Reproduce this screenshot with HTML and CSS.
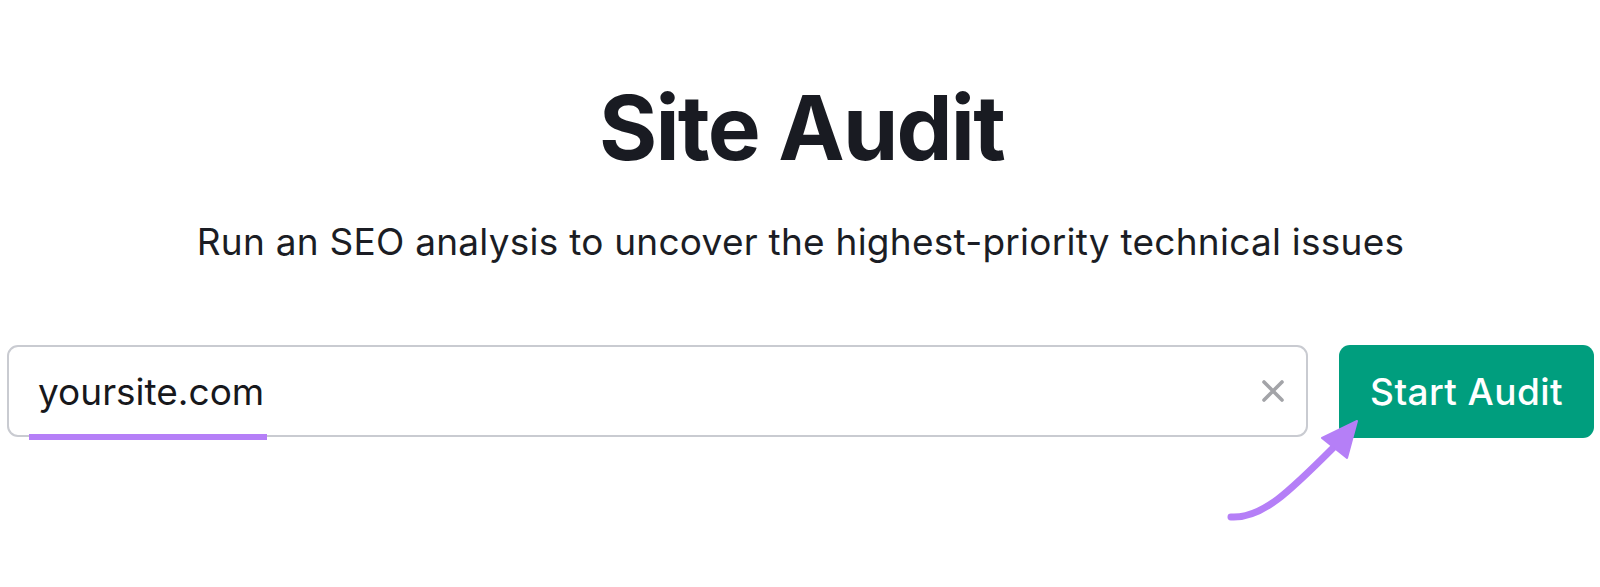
FILE: index.html
```html
<!DOCTYPE html>
<html lang="en">
<head>
<meta charset="utf-8">
<title>Site Audit</title>
<link rel="stylesheet" href="styles.css">
</head>
<body>
<main class="page">
  <h1 class="title">Site Audit</h1>
  <p class="subtitle">Run an SEO analysis to uncover the highest-priority technical issues</p>
  <div class="form-row">
    <div class="field">
      <span class="field-text">yoursite.com</span>
      <span class="field-underline"></span>
      <svg class="clear-icon" width="22" height="22" viewBox="0 0 22 22" aria-hidden="true">
        <path d="M2 2 L20 20 M20 2 L2 20" stroke="#a3a4a8" stroke-width="3.6" stroke-linecap="round" fill="none"/>
      </svg>
    </div>
    <button class="start-btn" type="button">Start Audit</button>
  </div>
  <svg class="arrow" width="1600" height="587" viewBox="0 0 1600 587" aria-hidden="true">
    <path d="M1231 517 C1262 519 1290 491 1334 447" stroke="#b57ff7" stroke-width="7" stroke-linecap="round" fill="none"/>
    <path d="M1357 421 L1322 438 L1347 458 Z" fill="#b57ff7" stroke="#b57ff7" stroke-width="2" stroke-linejoin="round"/>
  </svg>
</main>
</body>
</html>
```
FILE: styles.css
```css
html, body {
  margin: 0;
  padding: 0;
  background: #ffffff;
}
body {
  font-family: Inter, "Noto Sans", sans-serif;
  color: #1b1d24;
}
.page {
  position: relative;
  box-sizing: border-box;
  width: 1600px;
  height: 587px;
  padding: 0 6px 0 7px;
  display: flex;
  flex-direction: column;
  align-items: center;
  overflow: hidden;
}
.title {
  margin: 74px 0 0 0;
  font-size: 89px;
  line-height: 108px;
  font-weight: 700;
  letter-spacing: -1.8px;
  color: #191b22;
  padding-left: 2px;
}
.subtitle {
  margin: 38px 0 0 0;
  font-size: 37px;
  line-height: 44px;
  font-weight: 400;
  letter-spacing: 0.25px;
  color: #1b1d24;
}
.form-row {
  margin-top: 81px;
  width: 100%;
  display: flex;
  gap: 31px;
}
.field {
  position: relative;
  flex: 1;
  height: 92px;
  box-sizing: border-box;
  border: 2px solid #c9cbd1;
  border-radius: 11px;
  display: flex;
  align-items: center;
  padding: 0 22px 0 29px;
}
.field-text {
  flex: 1;
  font-size: 37px;
  color: #17181c;
}
.field-underline {
  position: absolute;
  left: 20px;
  bottom: -5px;
  width: 238px;
  height: 6px;
  background: #b57ff7;
}
.clear-icon {
  display: block;
}
.start-btn {
  width: 255px;
  height: 93px;
  border: none;
  border-radius: 11px;
  background: #009e7e;
  color: #ffffff;
  font-family: Inter, "Noto Sans", sans-serif;
  font-size: 37px;
  font-weight: 500;
  letter-spacing: 0.4px;
  padding: 0;
  cursor: pointer;
}
.arrow {
  position: absolute;
  left: 0;
  top: 0;
  pointer-events: none;
}
```
